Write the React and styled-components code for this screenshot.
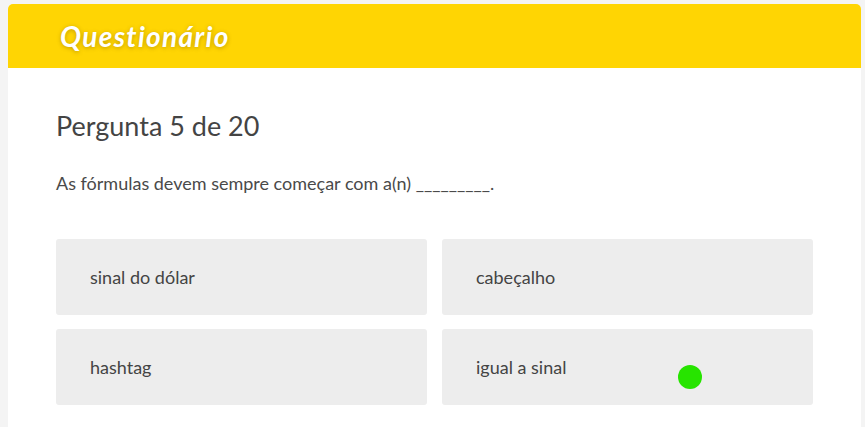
import React from 'react';
import styled, { createGlobalStyle } from 'styled-components';

const GlobalStyle = createGlobalStyle`
  html, body {
    margin: 0;
    padding: 0;
    background: #f4f4f4;
    font-family: Lato, "Open Sans", sans-serif;
  }
`

const Page = styled.div`
  padding: 4px 4px 0 8px;
  height: 427px;
  box-sizing: border-box;
  overflow: hidden;
`

const Card = styled.section`
  background: #fff;
  border-radius: 5px 5px 0 0;
  overflow: hidden;
  min-height: 423px;
`

const Header = styled.header`
  background: #ffd503;
  height: 64px;
  display: flex;
  align-items: center;
  padding-left: 52px;
`

const Title = styled.h1`
  margin: 0;
  color: #fff;
  font-size: 28px;
  font-weight: 700;
  font-style: italic;
  letter-spacing: 1.3px;
  text-shadow: 0 1px 4px rgba(120, 90, 0, 0.45);
`

const Body = styled.div`
  padding: 41px 48px 0 48px;
  position: relative;
`

const Question = styled.h2`
  margin: 0 0 30px;
  font-size: 27px;
  font-weight: 400;
  color: #444;
`

const Prompt = styled.p`
  margin: 0 0 45px;
  font-size: 18px;
  color: #4a4a4a;
`

const Options = styled.div`
  display: grid;
  grid-template-columns: 371px 371px;
  column-gap: 15px;
  row-gap: 14px;
`

const Option = styled.button`
  height: 76px;
  border: 0;
  border-radius: 3px;
  background: #ededed;
  text-align: left;
  padding: 0 34px;
  font-family: inherit;
  font-size: 18px;
  color: #444;
  cursor: pointer;
`

const Cursor = styled.span`
  position: absolute;
  left: 670px;
  top: 297px;
  width: 24px;
  height: 24px;
  border-radius: 50%;
  background: #27e400;
`

const answers = ['sinal do dólar', 'cabeçalho', 'hashtag', 'igual a sinal']

export default function App() {
  return (
    <Page>
      <GlobalStyle />
      <Card>
        <Header>
          <Title>Questionário</Title>
        </Header>
        <Body>
          <Question>Pergunta 5 de 20</Question>
          <Prompt>As fórmulas devem sempre começar com a(n) _________.</Prompt>
          <Options>
            {answers.map(a => <Option key={a}>{a}</Option>)}
          </Options>
          <Cursor />
        </Body>
      </Card>
    </Page>
  )
}
